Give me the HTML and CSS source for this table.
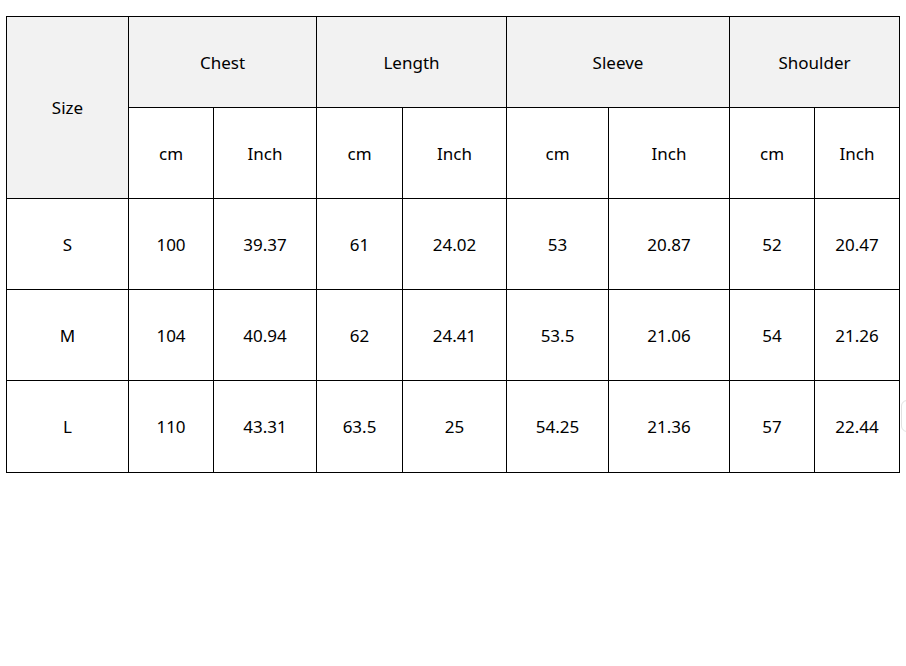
FILE: index.html
```html
<!DOCTYPE html>
<html>
<head>
<meta charset="utf-8">
<link rel="stylesheet" href="styles.css">
</head>
<body>
<div class="sheet">
  <div class="cell head size">Size</div>
  <div class="cell head span2">Chest</div>
  <div class="cell head span2">Length</div>
  <div class="cell head span2">Sleeve</div>
  <div class="cell head span2">Shoulder</div>
  <div class="cell">cm</div><div class="cell">Inch</div>
  <div class="cell">cm</div><div class="cell">Inch</div>
  <div class="cell">cm</div><div class="cell">Inch</div>
  <div class="cell">cm</div><div class="cell">Inch</div>

  <div class="cell">S</div><div class="cell">100</div><div class="cell">39.37</div><div class="cell">61</div><div class="cell">24.02</div><div class="cell">53</div><div class="cell">20.87</div><div class="cell">52</div><div class="cell">20.47</div>
  <div class="cell">M</div><div class="cell">104</div><div class="cell">40.94</div><div class="cell">62</div><div class="cell">24.41</div><div class="cell">53.5</div><div class="cell">21.06</div><div class="cell">54</div><div class="cell">21.26</div>
  <div class="cell">L</div><div class="cell">110</div><div class="cell">43.31</div><div class="cell">63.5</div><div class="cell">25</div><div class="cell">54.25</div><div class="cell">21.36</div><div class="cell">57</div><div class="cell">22.44</div>
</div>
<div class="edge-handle"></div>
</body>
</html>
```
FILE: styles.css
```css
html, body {
  margin: 0;
  padding: 0;
  background: #fff;
}
body {
  padding: 16px 0 0 6px;
  font-family: "Noto Sans", "Open Sans", sans-serif;
  font-size: 17px;
  color: #000;
  position: relative;
  height: 650px;
  overflow: hidden;
}
.sheet {
  display: grid;
  grid-template-columns: 121px 84px 102px 85px 103px 101px 120px 84px 84px;
  grid-template-rows: 90px 90px 90px 90px 91px;
  gap: 1px;
  padding: 1px;
  background: #000;
  width: max-content;
}
.cell {
  background: #fff;
  display: flex;
  align-items: center;
  justify-content: center;
  line-height: 1;
}
.head {
  background: #f2f2f2;
}
.size {
  grid-row: span 2;
}
.span2 {
  grid-column: span 2;
}
.edge-handle {
  position: absolute;
  left: 901px;
  top: 400px;
  width: 12px;
  height: 30px;
  border: 1px solid #e2e2e2;
  border-radius: 6px;
}
```
